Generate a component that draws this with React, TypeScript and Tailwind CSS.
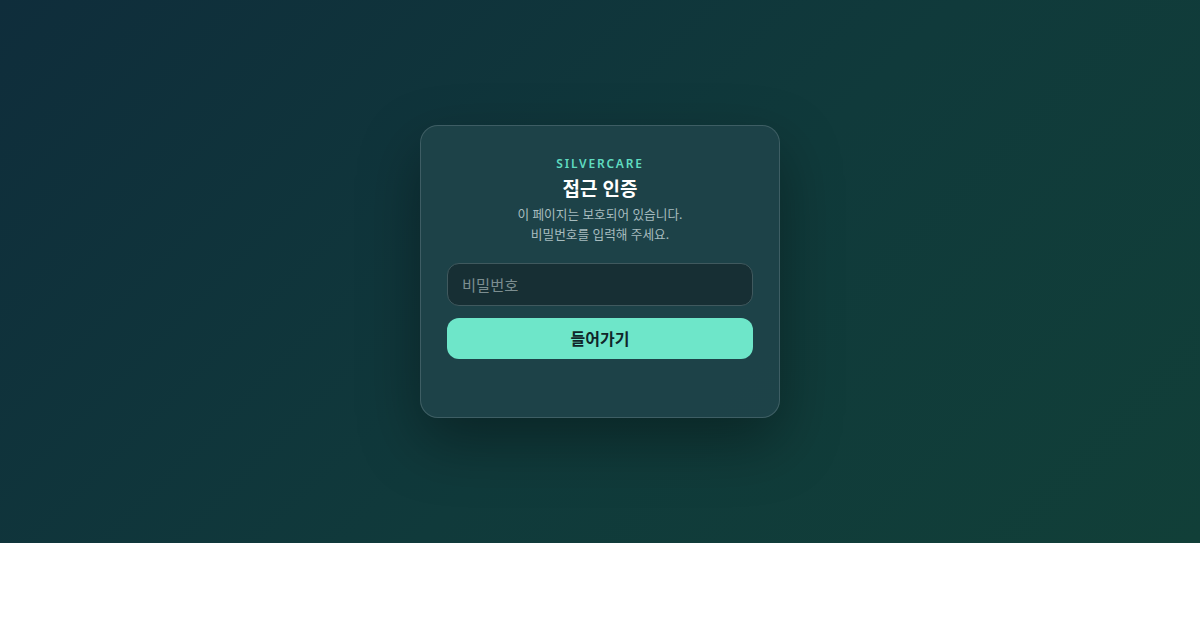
export default function App() {
  return (
    <div className="w-full bg-white font-['Noto_Sans','Noto_Sans_CJK_KR',sans-serif]">
      <main className="flex h-[543px] w-full items-center justify-center bg-[linear-gradient(135deg,#0f2d3b_0%,#103a3b_55%,#113f38_100%)]">
        <div className="w-[360px] rounded-[18px] border border-white/15 bg-[#1f444a]/90 px-[26px] pb-[58px] pt-[30px] text-center shadow-[0_24px_60px_rgba(0,0,0,0.35)]">
          <p className="text-[12px] font-semibold leading-4 tracking-[0.15em] text-[#5fdcc0]">SILVERCARE</p>
          <h1 className="mt-[3px] text-[19px] font-bold leading-7 text-white">접근 인증</h1>
          <p className="mt-[1px] text-[12.7px] leading-5 text-[#a7bcbf]">
            이 페이지는 보호되어 있습니다.
            <br />
            비밀번호를 입력해 주세요.
          </p>
          <input
            type="password"
            autoFocus
            placeholder="비밀번호"
            className="mt-[19px] h-[43px] w-full rounded-[12px] border border-[#40595e] bg-[#172f34] px-[14px] text-[15.3px] text-white caret-white outline-none placeholder:text-[#7c8e90]"
          />
          <button className="mt-[12px] h-[41px] w-full rounded-[12px] bg-[#6ee6c9] text-[16px] font-bold text-[#10262a]">
            들어가기
          </button>
        </div>
      </main>
      <div className="h-[87px]" />
    </div>
  )
}
